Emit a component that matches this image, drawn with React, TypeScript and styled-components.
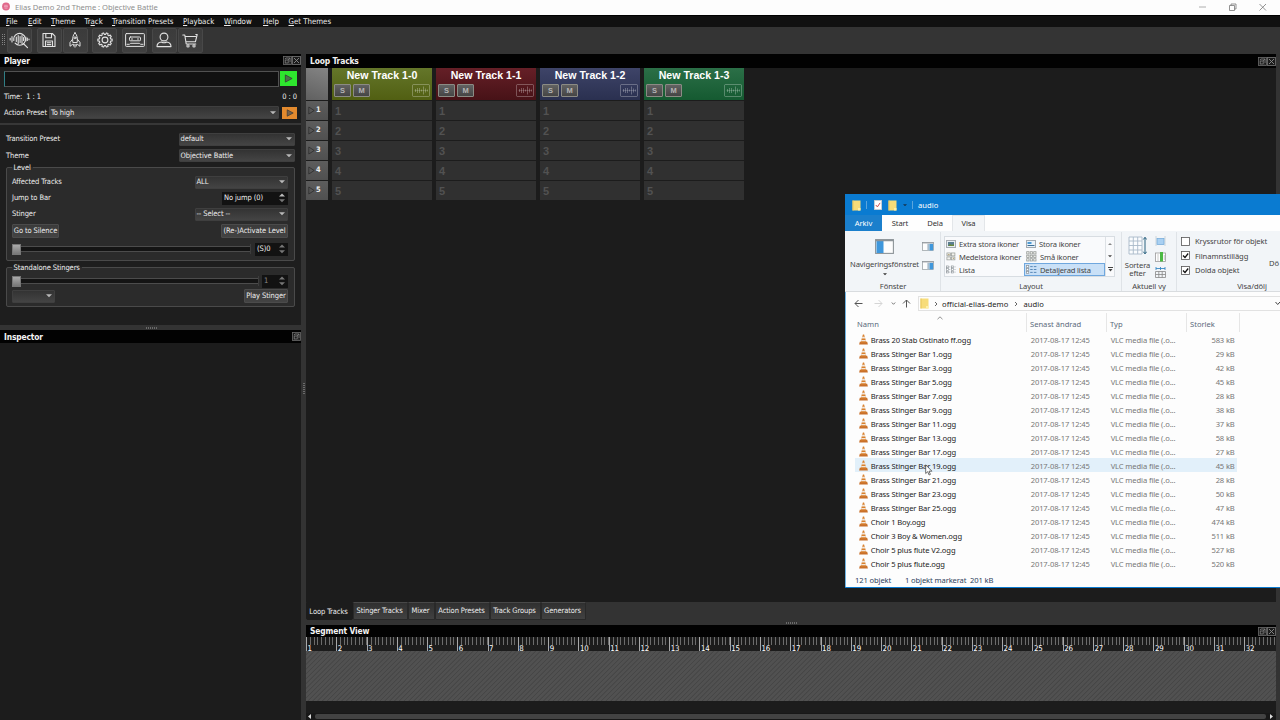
import React from "react";
import styled, { createGlobalStyle, css } from "styled-components";

const GlobalStyle = createGlobalStyle`
  * { box-sizing: border-box; }
  html, body { margin: 0; padding: 0; overflow: hidden; background: #333; }
  svg { display: block; flex: none; }
`;

const tahoma = css`
  font-family: "DejaVu Sans Condensed", "DejaVu Sans", sans-serif;
  font-stretch: condensed;
  font-size: 7.5px;
  letter-spacing: -0.1px;
`;
const segoe = css`
  font-family: "Noto Sans", "Open Sans", sans-serif;
  font-size: 7.6px;
  letter-spacing: -0.12px;
`;

/* ---------- application frame ---------- */
const App = styled.div`
  ${tahoma}
  position: relative;
  width: 1280px;
  height: 720px;
  display: flex;
  flex-direction: column;
  overflow: hidden;
  background: #333333;
  color: #eeeeee;
  white-space: nowrap;
  line-height: 10px;
`;
const TitleBar = styled.header`
  ${segoe}
  height: 15px;
  flex: none;
  display: flex;
  align-items: center;
  padding: 0 13px 2px 2px;
  background: #fdfdfd;
  color: #8d8d8d;
  letter-spacing: -0.03px;
`;
const TitleText = styled.span`
  margin-left: 5px;
  flex: 1;
`;
const WindowButtons = styled.div`
  display: flex;
  gap: 21px;
`;
const MenuBar = styled.nav`
  height: 12px;
  flex: none;
  display: flex;
  align-items: center;
  padding-left: 6px;
  background: #111111;
  border-top: 1px solid #000;
  font-size: 7.8px;
  letter-spacing: 0;
`;
const MenuItem = styled.span<{ $w: number }>`
  width: ${(p) => p.$w}px;
`;
const Toolbar = styled.div`
  height: 27px;
  flex: none;
  display: flex;
  align-items: center;
  padding: 0 0 1px 2px;
  background: #343434;
`;
const ToolButton = styled.div<{ $gap?: number }>`
  width: 25px;
  height: 25px;
  display: grid;
  place-items: center;
  margin-right: ${(p) => p.$gap ?? 1}px;
  border: 1px solid #484848;
  border-radius: 2px;
  background: linear-gradient(#3b3b3b, #404040);
`;
const Workspace = styled.div`
  flex: 1;
  min-height: 0;
  display: flex;
`;
const LeftColumn = styled.div`
  width: 301px;
  display: flex;
  flex-direction: column;
`;
const RightColumn = styled.div`
  width: 970px;
  display: flex;
  flex-direction: column;
`;
const Splitter = styled.div<{ $vertical?: boolean; $size: number; $dot: number }>`
  flex: none;
  ${(p) => (p.$vertical ? `width: ${p.$size}px;` : `height: ${p.$size}px;`)}
  display: flex;
  justify-content: center;
  align-items: ${(p) => (p.$vertical ? "flex-start" : "center")};
  background: #333333;
  &::after {
    content: "";
    ${(p) =>
      p.$vertical
        ? `width: 2px; height: 12px; margin-top: ${p.$dot}px;`
        : `width: 12px; height: 2px; margin-left: ${p.$dot}px;`}
    background: repeating-linear-gradient(${(p) => (p.$vertical ? "180deg" : "90deg")}, #6b6b6b 0 1px, transparent 1px 2px);
  }
`;
const DockTitle = styled.div<{ $h: number }>`
  height: ${(p) => p.$h}px;
  flex: none;
  display: flex;
  align-items: center;
  justify-content: space-between;
  padding: 0 0 0 4px;
  background: #020202;
  color: #f4f4f4;
  font-weight: bold;
  font-size: 8.4px;
  letter-spacing: -0.13px;
`;
const DockButtons = styled.div`
  display: flex;
  gap: 0.5px;
`;

/* ---------- form controls ---------- */
const Row = styled.div<{ $h: number }>`
  height: ${(p) => p.$h}px;
  flex: none;
  display: flex;
  align-items: center;
  justify-content: space-between;
`;
const Combo = styled.div<{ $w: number }>`
  width: ${(p) => p.$w}px;
  height: 13px;
  display: flex;
  align-items: center;
  justify-content: space-between;
  padding: 0 2px 0 0.5px;
  border: 1px solid #3f3f3f;
  border-radius: 1px;
  background: linear-gradient(#333333, #444444);
`;
const Spin = styled.div<{ $w: number; $dim?: boolean }>`
  width: ${(p) => p.$w}px;
  height: 13px;
  display: flex;
  align-items: center;
  justify-content: space-between;
  padding: 0 3px 0 2px;
  background: #121212;
  color: ${(p) => (p.$dim ? "#8a8a8a" : "#eeeeee")};
`;
const PushButton = styled.div<{ $w: number }>`
  width: ${(p) => p.$w}px;
  height: 14px;
  display: flex;
  align-items: center;
  justify-content: center;
  border: 1px solid #4b4b4b;
  border-radius: 1px;
  background: linear-gradient(#3b3b3b, #434343);
`;
const PlayButton = styled.div<{ $color: string; $h: number }>`
  width: ${(p) => (p.$h > 13 ? 17 : 15)}px;
  height: ${(p) => p.$h}px;
  display: grid;
  place-items: center;
  background: ${(p) => p.$color};
`;
const SliderTrack = styled.div<{ $w: number }>`
  width: ${(p) => p.$w}px;
  height: 10px;
  display: flex;
  align-items: center;
  background: linear-gradient(transparent 2px, #4c4c4c 2px 3px, #141414 3px 7px, #4c4c4c 7px 8px, transparent 8px);
  border-right: 1px solid #3c3c3c;
  &::before {
    content: "";
    width: 7px;
    height: 9px;
    border: 1px solid #777;
    background: linear-gradient(#aaaaaa, #777777);
  }
`;
const Transport = styled.section`
  height: 56px;
  flex: none;
  background: #1e1e1e;
  padding: 3px 4px 0 4px;
`;
const Prompt = styled.div`
  width: 275px;
  height: 16px;
  border: 1px solid #515151;
  border-left-color: #2f7f86;
  background: #111111;
`;
const PlayerBody = styled.section`
  height: 202px;
  flex: none;
  border-top: 2px solid #373737;
  padding: 6px 6px 0 6px;
  background: #1e1e1e;
`;
const Group = styled.fieldset<{ $h: number; $top: number }>`
  height: ${(p) => p.$h}px;
  min-width: 0;
  margin: ${(p) => p.$top}px 0 0;
  padding: 2px 6px 0 5px;
  border: 1px solid #4a4a4a;
  border-radius: 2px;
  background: #2b2b2b;
  legend { padding: 0 2px 0 1.5px; line-height: 9px; height: 9px; }
`;
const InspectorBody = styled.div`
  flex: 1;
  background: #1c1c1c;
`;

/* ---------- loop tracks ---------- */
const LoopArea = styled.section`
  height: 534px;
  flex: none;
  display: flex;
  align-items: flex-start;
  background: #1c1c1c;
`;
const LevelColumn = styled.div`
  width: 22px;
  margin-right: 4px;
`;
const LevelHead = styled.div`
  height: 32px;
  margin-bottom: 1px;
  background: linear-gradient(200deg, #848484, #606060);
`;
const LevelCell = styled.div`
  height: 19px;
  margin-bottom: 1px;
  padding: 0 0 1px 2px;
  display: flex;
  align-items: center;
  gap: 1px;
  background: linear-gradient(#5d5d5d, #505050);
  font-size: 7.4px;
  font-weight: bold;
`;
const Track = styled.div`
  width: 100px;
  margin-right: 4px;
  font-family: "Liberation Sans", Arial, sans-serif;
  letter-spacing: 0;
`;
const TrackHead = styled.div<{ $from: string; $to: string }>`
  height: 32px;
  margin-bottom: 1px;
  padding: 1px 2px 0;
  background: linear-gradient(${(p) => p.$from}, ${(p) => p.$to});
`;
const TrackName = styled.div`
  text-align: center;
  font-size: 10.6px;
  font-weight: bold;
  line-height: 12px;
  color: #ffffff;
`;
const TrackButtons = styled.div`
  display: flex;
  align-items: center;
  gap: 2px;
  margin-top: 3px;
  svg { margin-left: auto; }
`;
const Toggle = styled.div`
  width: 17px;
  height: 13px;
  border: 1px solid #8b8b84;
  border-radius: 1px;
  background: linear-gradient(#626262, #454545);
  color: #b4b4b4;
  font-size: 7.5px;
  font-weight: bold;
  line-height: 12px;
  text-align: center;
`;
const Slot = styled.div`
  height: 19px;
  margin-bottom: 1px;
  padding-left: 3px;
  background: #303030;
  color: #525252;
  font-size: 11px;
  font-weight: bold;
  line-height: 20px;
`;
const Tabs = styled.div`
  height: 18px;
  flex: none;
  display: flex;
`;
const Tab = styled.div<{ $w: number; $active?: boolean }>`
  width: ${(p) => p.$w}px;
  padding-right: 2px;
  text-align: center;
  line-height: ${(p) => (p.$active ? 18 : 16)}px;
  background: ${(p) => (p.$active ? "#1c1c1c" : "linear-gradient(#303030, #414141)")};
  border: 1px solid ${(p) => (p.$active ? "#1c1c1c" : "#292929")};
  border-top-color: ${(p) => (p.$active ? "#1c1c1c" : "#484848")};
  border-radius: 0 0 2px 2px;
`;

/* ---------- segment view ---------- */
const Ruler = styled.div`
  height: 14px;
  flex: none;
  display: flex;
  background: #1c1c1c;
`;
const BarMark = styled.div`
  width: 30.27px;
  flex: none;
  padding: 6px 0 0 1.5px;
  line-height: 11px;
  font-size: 7.8px;
  color: #ffffff;
  background:
    linear-gradient(#a8a8a8, #a8a8a8) 0 0 / 1px 14px no-repeat,
    repeating-linear-gradient(90deg, #6c6c6c 0 1px, transparent 1px 3.784px) 0 0 / 100% 8px no-repeat;
`;
const Hatch = styled.div`
  height: 50px;
  flex: none;
  background: repeating-linear-gradient(135deg, #515151 0 1.9px, #464646 2.5px 2.9px, #515151 3.4px);
`;
const SegmentRest = styled.div`
  flex: 1;
  background: #1c1c1c;
`;
const ScrollBar = styled.div`
  height: 7px;
  flex: none;
  display: flex;
  align-items: center;
  gap: 3px;
  padding: 0 2px 0 1px;
  background: #181818;
`;
const Thumb = styled.div`
  flex: 1;
  height: 5px;
  border-radius: 2px;
  background: #434343;
`;

/* ---------- file explorer window ---------- */
const Explorer = styled.div`
  ${segoe}
  position: absolute;
  left: 845px;
  top: 194px;
  width: 435px;
  height: 394px;
  display: flex;
  flex-direction: column;
  overflow: hidden;
  border: solid #0b7bd0;
  border-width: 1px 0 1px 0;
  box-shadow: inset 1px 0 0 #6fb3e2;
  background: #fdfdfd;
  color: #1b1b1b;
`;
const ExTitle = styled.div`
  height: 20px;
  flex: none;
  display: flex;
  align-items: center;
  padding-left: 7px;
  background: #0a7bd1;
  color: #ffffff;
  letter-spacing: 0.05px;
`;
const ExSep = styled.i<{ $l: number; $r: number; $hidden?: boolean }>`
  width: 1px;
  height: 8px;
  margin: 0 ${(p) => p.$r}px 0 ${(p) => p.$l}px;
  background: ${(p) => (p.$hidden ? "transparent" : "#5aa5dd")};
`;
const ExTabs = styled.div`
  height: 16px;
  flex: none;
  display: flex;
  background: #fefefe;
`;
const ExTab = styled.div<{ $w: number; $kind?: "file" | "open" }>`
  width: ${(p) => p.$w}px;
  line-height: 16px;
  text-align: center;
  color: ${(p) => (p.$kind === "file" ? "#ffffff" : "#333333")};
  background: ${(p) => (p.$kind === "file" ? "#1b7fcc" : p.$kind === "open" ? "#f4f6f8" : "transparent")};
  ${(p) => p.$kind === "open" && "border: 1px solid #e3e6e9; border-bottom: 0; line-height: 15px;"}
`;
const Ribbon = styled.div`
  height: 61px;
  flex: none;
  display: flex;
  padding: 1px 0 0 1px;
  background: #f2f5f8;
  border-bottom: 1px solid #d9dcdf;
  color: #444444;
  letter-spacing: -0.08px;
`;
const RibbonGroup = styled.div<{ $w: number; $last?: boolean }>`
  width: ${(p) => p.$w}px;
  flex: none;
  height: 59px;
  display: flex;
  flex-direction: column;
  border-right: ${(p) => (p.$last ? 0 : 1)}px solid #dfe3e7;
`;
const RibbonBody = styled.div<{ $pad: string }>`
  height: 49px;
  display: flex;
  padding: ${(p) => p.$pad};
`;
const RibbonCaption = styled.div`
  text-align: center;
`;
const BigCommand = styled.div<{ $w: number; $gap?: number }>`
  width: ${(p) => p.$w}px;
  display: flex;
  flex-direction: column;
  align-items: center;
  text-align: center;
  line-height: 8px;
  gap: ${(p) => p.$gap ?? 6}px;
  letter-spacing: -0.12px;
`;
const IconStack = styled.div<{ $gap: number; $pad: string }>`
  display: flex;
  flex-direction: column;
  gap: ${(p) => p.$gap}px;
  padding: ${(p) => p.$pad};
`;
const ViewGallery = styled.div`
  display: grid;
  grid-template-columns: 79px 81px 9px;
  grid-auto-rows: 13px;
  border: 1px solid #d8dde2;
  background: #f9fafc;
  height: 41px;
`;
const ViewOption = styled.div<{ $on?: boolean }>`
  display: flex;
  align-items: center;
  gap: 3px;
  padding-left: 1px;
  letter-spacing: -0.17px;
  &:nth-child(3n + 2) { padding-left: 2px; }
  ${(p) => p.$on && "background: #c9e0f7; outline: 1px solid #6fa7de; outline-offset: -1px;"}
`;
const GalleryScroll = styled.div`
  display: grid;
  place-items: center;
  border-left: 1px solid #dde1e5;
`;
const CheckList = styled.div`
  width: 88px;
  display: grid;
  grid-auto-rows: 14.6px;
  align-items: center;
`;
const CheckItem = styled.div`
  display: flex;
  align-items: center;
  gap: 5px;
`;
const ClippedCommand = styled.div`
  padding-top: 24px;
`;
const AddressBar = styled.div`
  height: 19px;
  flex: none;
  display: flex;
  align-items: center;
  padding-left: 9px;
  margin-top: 2px;
`;
const NavIcons = styled.div`
  width: 64px;
  display: flex;
  align-items: center;
`;
const NavGap = styled.i<{ $w: number }>`
  width: ${(p) => p.$w}px;
`;
const AddressField = styled.div`
  flex: 1;
  height: 15px;
  display: flex;
  align-items: center;
  border: 1px solid #e2e2e2;
  border-right: 0;
  padding-left: 1px;
  letter-spacing: 0.06px;
`;
const FieldEnd = styled.span`
  margin-left: auto;
`;
const Crumb = styled.span<{ $l: number; $r: number }>`
  margin: 0 ${(p) => p.$r}px 0 ${(p) => p.$l}px;
`;
const columns = "171px 80px 80px 53px";
const FileHead = styled.div`
  height: 19px;
  flex: none;
  display: grid;
  grid-template-columns: ${columns};
  margin: 0 0 0 10.5px;
  color: #5b6a7c;
`;
const HeadCell = styled.div<{ $w: number }>`
  position: relative;
  width: ${(p) => p.$w}px;
  padding: 6px 0 0 1.5px;
  border-right: 1px solid #e6e6e6;
  letter-spacing: 0;
`;
const SortMark = styled.span`
  position: absolute;
  top: 3px;
  left: 81px;
`;
const FileRow = styled.div<{ $hover?: boolean }>`
  width: 382px;
  height: 14px;
  flex: none;
  display: grid;
  grid-template-columns: ${columns};
  align-items: center;
  margin-left: 10px;
  padding: 1px 0 0 0.7px;
  background: ${(p) => (p.$hover ? "#e2f0fa" : "transparent")};
`;
const FileName = styled.div`
  display: flex;
  align-items: center;
  gap: 3px;
  padding-left: 3px;
  letter-spacing: -0.11px;
`;
const FileMeta = styled.div<{ $right?: boolean }>`
  padding: 0 5px 0 4px;
  color: #777777;
  text-align: ${(p) => (p.$right ? "right" : "left")};
`;
const StatusBar = styled.div`
  display: flex;
  margin-top: 4.500px;
  padding-left: 10px;
  color: #2d3f5c;
`;
const StatusText = styled.span<{ $w: number }>`
  width: ${(p) => p.$w}px;
`;
const Pointer = styled.div`
  position: absolute;
  left: 925px;
  top: 464px;
`;

/* ---------- icons ---------- */
const Arrow = ({ c = "#b9b9b9", w = 6 }: { c?: string; w?: number }) => (
  <svg width={w} height={w / 2 + 0.5} viewBox="0 0 6 3"><path d="M0 0h6L3 3z" fill={c} /></svg>
);
const SpinArrows = ({ dim }: { dim?: boolean }) => (
  <svg width="6" height="10" viewBox="0 0 6 10">
    <path d="M0 3.6L3 .6l3 3z" fill={dim ? "#777" : "#bbb"} />
    <path d="M0 6.2h6l-3 3z" fill="#777" />
  </svg>
);
const Grip = () => (
  <svg width="5" height="14" viewBox="0 0 5 14" fill="#858585">
    {[1, 3, 5, 7, 9, 11].map((y) => <path key={y} d={`M0 ${y}h1v1H0zM2 ${y}h1v1H2z`} />)}
  </svg>
);
const FloatIcon = () => (
  <svg width="9" height="9" viewBox="0 0 9 9" fill="none" stroke="#808080" strokeWidth=".8">
    <rect x=".5" y=".5" width="8" height="8" fill="#1b1b1b" stroke="#6c6c6c" />
    <rect x="2.2" y="4" width="3" height="3" /><path d="M3 2h4v4M5 4l2-2M2 2l1 1M6.6 7.2l.6.4" />
  </svg>
);
const CloseIcon = () => (
  <svg width="9" height="9" viewBox="0 0 9 9" fill="none" stroke="#8c8c8c" strokeWidth=".9">
    <rect x=".5" y=".5" width="8" height="8" fill="#1b1b1b" stroke="#6c6c6c" />
    <path d="M2 2l5 5M7 2l-5 5" />
  </svg>
);
const Play = ({ s = 9 }: { s?: number }) => (
  <svg width={s} height={s} viewBox="0 0 10 10"><path d="M1.5 1l7.5 4-7.5 4z" fill="#555" fillOpacity=".8" stroke="#333" strokeWidth=".8" /></svg>
);
const icon = { fill: "none", stroke: "#e2e2e2", strokeWidth: 1.1, strokeLinejoin: "round" as const, strokeLinecap: "round" as const };
const WaveSearch = () => (
  <svg width="21" height="17" viewBox="0 0 21 17" {...icon}>
    <path d="M1.2 6.300v1.700M3 4.500v5.500M4.800 6v2.500M16.800 5v4M18.300 6v2.500M20 7v.7M7.300 5v4.500M9.200 3.500v8M11.100 4.500v6M13 3.500v8M14.600 5.500v3" />
    <path d="M5 5.300A5.900 5.900 0 1 1 6.1 11.200M14.300 11.500l4.200 4.200" />
  </svg>
);
const Floppy = () => (
  <svg width="14" height="16" viewBox="0 0 14 16" {...icon}>
    <path d="M1 1.500h9.300L13 4.200v10.300H1zM3.800 1.500v4.200h5.700V1.500M3.500 14.500V9h7v5.500M5.200 10.800h3.600M5.200 12.600h3.600" />
  </svg>
);
const Rocket = () => (
  <svg width="12" height="16" viewBox="0 0 12 16" {...icon} strokeWidth={1}>
    <path d="M6 .8C3.800 3 3.400 6 3.800 10.500h4.400C8.600 6 8.200 3 6 .8zM3.600 7.200L1 10.500v3.800l2.600-2M8.400 7.200l2.600 3.300v3.800l-2.600-2M4.700 12.200V14M7.300 12.200V14M6 12.500v2.700" />
    <circle cx="6" cy="5.800" r="1" />
  </svg>
);
const teeth = Array.from({ length: 10 }, (_, i) => {
  const p = (r: number, d: number) => {
    const a = ((i * 36 + d) * Math.PI) / 180;
    return `${(8 + r * Math.cos(a)).toFixed(2)} ${(8 + r * Math.sin(a)).toFixed(2)}`;
  };
  return `${i ? "L" : "M"}${p(5.7, -11)}L${p(7.2, -7)}L${p(7.2, 7)}L${p(5.7, 11)}`;
}).join("");
const Gear = () => (
  <svg width="16" height="16" viewBox="0 0 16 16" {...icon}><path d={teeth + "z"} /><circle cx="8" cy="8" r="2.900" /></svg>
);
const Cassette = () => (
  <svg width="20" height="14" viewBox="0 0 20 14" {...icon} strokeWidth={1}>
    <rect x=".6" y=".6" width="18.800" height="12.800" rx=".8" /><rect x="4.500" y="4" width="11" height="3.800" rx="1" />
    <path d="M6.500 6h1M12.500 6h1M2 11.300h2.500l1-1h9l1 1H18" />
  </svg>
);
const Person = () => (
  <svg width="16" height="16" viewBox="0 0 16 16" {...icon}>
    <circle cx="8" cy="5" r="3.900" /><path d="M1 14.600c0-3.200 2-4.400 4.500-4.600 1.600 1 3.400 1 5 0 2.500.200 4.500 1.400 4.500 4.600z" />
  </svg>
);
const Cart = () => (
  <svg width="16" height="15" viewBox="0 0 16 15" {...icon}>
    <path d="M.8 2h2l1.400 9h9.600M3.100 3.500h10.500M15.200 1.500l-1.800 7.300H4M15.200 1.500h-1.400" /><circle cx="6" cy="12.900" r="1.100" /><circle cx="12" cy="12.900" r="1.100" />
  </svg>
);
const WaveBox = () => (
  <svg width="18" height="13" viewBox="0 0 18 13" fill="none" stroke="#fff" strokeOpacity=".27" strokeWidth="1">
    <rect x=".5" y=".5" width="17" height="12" rx="1" />
    <path d="M3.500 5v3M5.500 4v5M7.500 4v5M9.500 5.500v2M11.500 2.500v8M13.500 4.500v4M15.500 5.500v2" />
    <path d="M2.500 6.500h13" strokeWidth=".6" />
  </svg>
);
const AppLogo = () => (
  <svg width="8" height="9" viewBox="0 0 8 9">
    <circle cx="4" cy="4.500" r="3.900" fill="#e0688a" /><path d="M2.200 3.300h3.500M2 4.700h4M2.500 6.100h3" stroke="#f3b3c6" strokeWidth=".8" />
  </svg>
);
const Folder = () => (
  <svg width="9" height="11" viewBox="0 0 9 11">
    <path d="M.5.500h8v10h-8z" fill="#f7dc79" /><path d="M6 8h2.500v2.500H6z" fill="#fff0a8" /><path d="M.5.500h1v10h-1z" fill="#e7c65a" />
  </svg>
);
const CheckDoc = () => (
  <svg width="8" height="10" viewBox="0 0 8 10">
    <rect x=".3" y=".3" width="7.400" height="9.400" fill="#fff" stroke="#c8c8c8" strokeWidth=".6" /><path d="M1.800 5l1.600 1.900 2.700-4" fill="none" stroke="#cc4b4b" />
  </svg>
);
const Cone = () => (
  <svg width="9" height="11" viewBox="0 0 9 11">
    <path d="M.8 7.800h7.400l.7 2.700H.1z" fill="#c9702a" /><path d="M3.900.6h1.200L7.400 8.600H1.600z" fill="#d9822f" />
    <path d="M3.300 2.800h2.400l.5 1.700H2.800zM2.300 6.100h4.400l.3 1.200H2z" fill="#f2e6dc" />
  </svg>
);
const Pane = ({ side, big }: { side: "l" | "r"; big?: boolean }) => (
  <svg width={big ? 19 : 12} height={big ? 15 : 9} viewBox="0 0 19 15" preserveAspectRatio="none">
    <rect x=".6" y=".6" width="17.800" height="13.800" fill="#fdfdfd" stroke="#8d9499" strokeWidth="1.100" />
    {side === "l" ? <rect x="1.500" y="2" width="7" height="12" fill="#3f97dc" /> : <path d="M8.500 3h3.500v11H8.500z" fill="#a9bccb" />}
    {side === "r" && <rect x="12" y="3" width="5.600" height="11" fill="#3f97dc" />}
    <path d="M.6 1.500h17.800" stroke="#8d9499" strokeWidth="1.500" />
  </svg>
);
const Picture = () => (
  <svg width="10" height="8" viewBox="0 0 10 8">
    <rect x=".5" y=".5" width="9" height="7" fill="#e7edf2" stroke="#a4aab0" /><rect x="2" y="2" width="6" height="4" fill="#5b7e91" /><path d="M2 6l2-2 2 1 2-1v2z" fill="#6b8a3d" />
  </svg>
);
const PictureWide = () => (
  <svg width="10" height="8" viewBox="0 0 10 8">
    <rect x=".5" y=".5" width="9" height="7" fill="#e8f1f9" stroke="#a4aab0" /><path d="M1.500 2h4v2h-4z" fill="#4d9ad4" /><path d="M1.500 5.500h7" stroke="#3d6f95" />
  </svg>
);
const Tiles = ({ n }: { n: 2 | 3 }) => (
  <svg width={n === 2 ? 10 : 11} height={n === 2 ? 9 : 11} viewBox={n === 2 ? "0 0 11 9" : "0 0 11 11"} fill="#f3f3ee" stroke="#979b98" strokeWidth=".8">
    {(n === 2 ? [1, 6] : [0.7, 4.2, 7.7]).map((x) =>
      (n === 2 ? [0.6, 5] : [0.7, 4.2, 7.7]).map((y) => <rect key={x + "-" + y} x={x} y={y} width={n === 2 ? 3.8 : 2.3} height={n === 2 ? 3.2 : 2.3} />)
    )}
    {n === 2 && <path d="M2 2.500h2M7.500 6.500h1.500" stroke="#8e7b3f" />}
  </svg>
);
const ListIcon = ({ detail }: { detail?: boolean }) => (
  <svg width={detail ? 11 : 10} height="9" viewBox="0 0 11 9" fill="#fff" stroke="#8c9399" strokeWidth=".7">
    {[0.6, 3.5, 6.4].map((y) => (
      <g key={y}>
        <rect x=".5" y={y} width="2.200" height="1.900" />
        {detail ? <path d={`M4.200 ${y + 1}h2.500M7.800 ${y + 1}h2.600`} stroke="#4d7fb0" strokeWidth=".9" /> : <><path d={`M3.500 ${y + 1}h1.200M9.300 ${y + 1}h1.200`} /><rect x="6.200" y={y} width="2.200" height="1.900" /></>}
      </g>
    ))}
  </svg>
);
const SortIcon = () => (
  <svg width="19" height="20" viewBox="0 0 19 20" fill="none">
    <path d="M1 1h13v17H1zM1 5h13M1 9.500h13M1 14h13M5.300 1v17M9.700 1v17" stroke="#a9bac9" strokeWidth=".9" fill="#fafcfe" />
    <path d="M17 1.500v16M15.300 3.500L17 1.300l1.700 2.200M15.300 15.700L17 17.900l1.700-2.200" stroke="#28617f" strokeWidth="1" />
  </svg>
);
const GroupBy = () => (
  <svg width="11" height="11" viewBox="0 0 11 11"><path d="M1 .5v10M10 .5v10" stroke="#9aa3ab" strokeWidth=".8" strokeDasharray="1 1" /><rect x="2" y="2.500" width="7" height="6" fill="#a9d0f2" stroke="#6ea7d8" strokeWidth=".7" /></svg>
);
const AddColumns = () => (
  <svg width="11" height="11" viewBox="0 0 11 11"><rect x=".5" y="2" width="10" height="8.500" fill="#fff" stroke="#999" strokeWidth=".8" /><rect x="5" y="1" width="3" height="9.500" fill="#4cb944" /><path d="M3 3v7M9.300 4v5" stroke="#aaa" strokeWidth=".6" /></svg>
);
const SizeColumns = () => (
  <svg width="11" height="12" viewBox="0 0 11 12" fill="none"><path d="M.5 5.500h10v6H.5zM.5 8.500h10M3.800 5.500v6M7.200 5.500v6" stroke="#888" strokeWidth=".8" /><path d="M1 2.500h9M1 1v3M5.500 1v3M10 1v3" stroke="#3a8ac4" strokeWidth=".9" /></svg>
);
const CheckBox = ({ on }: { on?: boolean }) => (
  <svg width="9" height="9" viewBox="0 0 9 9" fill="none">
    <rect x=".5" y=".5" width="8" height="8" fill="#fff" stroke="#555" strokeWidth=".8" />{on && <path d="M2 4.500l2 2 3.200-4" stroke="#111" strokeWidth="1.300" />}
  </svg>
);
const NavArrow = ({ d, c = "#555", w = 9 }: { d: string; c?: string; w?: number }) => (
  <svg width={w} height="9" viewBox={`0 0 ${w} 9`} fill="none" stroke={c} strokeWidth="1"><path d={d} /></svg>
);
const Chevron = () => <svg width="4" height="6" viewBox="0 0 4 6" fill="none" stroke="#555" strokeWidth=".9"><path d="M1 1l2 2-2 2" /></svg>;

/* ---------- data ---------- */
const menus: { label: string; key: number; width: number }[] = [
  { label: "File", key: 0, width: 22 },
  { label: "Edit", key: 0, width: 23 },
  { label: "Theme", key: 0, width: 33.5 },
  { label: "Track", key: 2, width: 27.5 },
  { label: "Transition Presets", key: 0, width: 71 },
  { label: "Playback", key: 0, width: 41 },
  { label: "Window", key: 0, width: 39 },
  { label: "Help", key: 0, width: 25.5 },
  { label: "Get Themes", key: 0, width: 50 },
];
const tracks = [
  { name: "New Track 1-0", from: "#64762a", to: "#515f12" },
  { name: "New Track 1-1", from: "#651f27", to: "#471217" },
  { name: "New Track 1-2", from: "#3e4468", to: "#2a3050" },
  { name: "New Track 1-3", from: "#2b6f47", to: "#155a31" },
];
const tabs: [string, number][] = [["Loop Tracks", 47], ["Stinger Tracks", 55], ["Mixer", 27], ["Action Presets", 55], ["Track Groups", 51], ["Generators", 45]];
const files: [string, string][] = [
  ["Brass 20 Stab Ostinato ff.ogg", "583 kB"], ["Brass Stinger Bar 1.ogg", "29 kB"], ["Brass Stinger Bar 3.ogg", "42 kB"],
  ["Brass Stinger Bar 5.ogg", "45 kB"], ["Brass Stinger Bar 7.ogg", "28 kB"], ["Brass Stinger Bar 9.ogg", "38 kB"],
  ["Brass Stinger Bar 11.ogg", "37 kB"], ["Brass Stinger Bar 13.ogg", "58 kB"], ["Brass Stinger Bar 17.ogg", "27 kB"],
  ["Brass Stinger Bar 19.ogg", "45 kB"], ["Brass Stinger Bar 21.ogg", "28 kB"], ["Brass Stinger Bar 23.ogg", "50 kB"],
  ["Brass Stinger Bar 25.ogg", "47 kB"], ["Choir 1 Boy.ogg", "474 kB"], ["Choir 3 Boy & Women.ogg", "511 kB"],
  ["Choir 5 plus flute V2.ogg", "527 kB"], ["Choir 5 plus flute.ogg", "520 kB"],
];
const levels = [1, 2, 3, 4, 5];

const Dock = ({ title, h, closable = true }: { title: string; h: number; closable?: boolean }) => (
  <DockTitle $h={h}>
    {title}
    <DockButtons><FloatIcon />{closable && <CloseIcon />}</DockButtons>
  </DockTitle>
);

const PlayerPanel = () => (
  <>
    <Dock title="Player" h={13} />
    <Transport>
      <Row $h={17}><Prompt /><PlayButton $color="#2ee62e" $h={15}><Play /></PlayButton></Row>
      <Row $h={19}><span>Time:&nbsp; 1 : 1</span><span>0 : 0</span></Row>
      <Row $h={13}>
        <span>Action Preset</span><Combo $w={230}>To high<Arrow /></Combo>
        <PlayButton $color="#e38a2e" $h={12}><Play s={8} /></PlayButton>
      </Row>
    </Transport>
    <PlayerBody>
      <Row $h={16}><span>Transition Preset</span><Combo $w={116}>default<Arrow /></Combo></Row>
      <Row $h={17}><span>Theme</span><Combo $w={116}>Objective Battle<Arrow /></Combo></Row>
      <Group $h={98} $top={-1}>
        <legend>Level</legend>
        <Row $h={16}><span>Affected Tracks</span><Combo $w={93}>ALL<Arrow /></Combo></Row>
        <Row $h={16}><span>Jump to Bar</span><Spin $w={66}>No jump (0)<SpinArrows /></Spin></Row>
        <Row $h={16}><span>Stinger</span><Combo $w={93}>-- Select --<Arrow /></Combo></Row>
        <Row $h={17}><PushButton $w={47}>Go to Silence</PushButton><PushButton $w={67}>(Re-)Activate Level</PushButton></Row>
        <Row $h={20}><SliderTrack $w={239} /><Spin $w={33}>(S)0<SpinArrows dim /></Spin></Row>
      </Group>
      <Group $h={44} $top={2}>
        <legend>Standalone Stingers</legend>
        <Row $h={14}><SliderTrack $w={247} /><Spin $w={26} $dim>1<SpinArrows dim /></Spin></Row>
        <Row $h={16}><Combo $w={43}><span /><Arrow /></Combo><PushButton $w={44}>Play Stinger</PushButton></Row>
      </Group>
    </PlayerBody>
  </>
);

const LoopTracks = () => (
  <>
    <Dock title="Loop Tracks" h={14} />
    <LoopArea>
      <LevelColumn>
        <LevelHead />
        {levels.map((n) => (
          <LevelCell key={n}>
            <svg width="7" height="9" viewBox="0 0 7 9"><path d="M.8 1l5.400 3.500L.8 8z" fill="none" stroke="#2c2c2c" strokeWidth=".8" /></svg>{n}
          </LevelCell>
        ))}
      </LevelColumn>
      {tracks.map((t) => (
        <Track key={t.name}>
          <TrackHead $from={t.from} $to={t.to}>
            <TrackName>{t.name}</TrackName>
            <TrackButtons><Toggle>S</Toggle><Toggle>M</Toggle><WaveBox /></TrackButtons>
          </TrackHead>
          {levels.map((n) => <Slot key={n}>{n}</Slot>)}
        </Track>
      ))}
    </LoopArea>
    <Tabs>{tabs.map(([name, w], i) => <Tab key={name} $w={w} $active={i === 0}>{name}</Tab>)}</Tabs>
  </>
);

const SegmentView = () => (
  <>
    <Dock title="Segment View" h={12} />
    <Ruler>{Array.from({ length: 32 }, (_, i) => <BarMark key={i}>{i + 1}</BarMark>)}</Ruler>
    <Hatch />
    <SegmentRest />
    <ScrollBar>
      <svg width="5" height="5" viewBox="0 0 5 5"><path d="M4 0v5L1 2.500z" fill="#ddd" /></svg>
      <Thumb />
      <svg width="5" height="5" viewBox="0 0 5 5"><path d="M1 0v5l3-2.500z" fill="#ddd" /></svg>
    </ScrollBar>
  </>
);

const ExplorerWindow = () => (
  <Explorer>
    <ExTitle>
      <Folder /><ExSep $l={5} $r={7} /><CheckDoc />
      <ExSep $l={2} $r={3} $hidden /><Folder />
      <ExSep $l={2} $r={3} $hidden /><Arrow c="#16334d" w={4} />
      <ExSep $l={5} $r={5} />audio
    </ExTitle>
    <ExTabs>
      <ExTab $w={37} $kind="file">Arkiv</ExTab><ExTab $w={36}>Start</ExTab><ExTab $w={34}>Dela</ExTab><ExTab $w={33} $kind="open">Visa</ExTab>
    </ExTabs>
    <Ribbon>
      <RibbonGroup $w={95}>
        <RibbonBody $pad="7px 0 0 4px">
          <BigCommand $w={69} $gap={5.5}><Pane side="l" big /><span>Navigeringsfönstret</span><Arrow c="#333" w={4} /></BigCommand>
          <IconStack $gap={10} $pad="3px 0 0 3px"><Pane side="r" /><Pane side="r" /></IconStack>
        </RibbonBody>
        <RibbonCaption>Fönster</RibbonCaption>
      </RibbonGroup>
      <RibbonGroup $w={181}>
        <RibbonBody $pad="4px 0 0 3px">
          <ViewGallery>
            <ViewOption><Picture />Extra stora ikoner</ViewOption><ViewOption><PictureWide />Stora ikoner</ViewOption><GalleryScroll><svg width="4" height="2" viewBox="0 0 4 2"><path d="M0 2h4L2 0z" fill="#888" /></svg></GalleryScroll>
            <ViewOption><Tiles n={2} />Medelstora ikoner</ViewOption><ViewOption><Tiles n={3} />Små ikoner</ViewOption><GalleryScroll><Arrow c="#444" w={4} /></GalleryScroll>
            <ViewOption><ListIcon />Lista</ViewOption><ViewOption $on><ListIcon detail />Detaljerad lista</ViewOption><GalleryScroll><svg width="5" height="5" viewBox="0 0 5 5"><path d="M0 .5h5" stroke="#444" /><path d="M.5 2h4l-2 2.500z" fill="#444" /></svg></GalleryScroll>
          </ViewGallery>
        </RibbonBody>
        <RibbonCaption>Layout</RibbonCaption>
      </RibbonGroup>
      <RibbonGroup $w={55}>
        <RibbonBody $pad="4px 0 0 1px">
          <BigCommand $w={29} $gap={4.5}><SortIcon /><span>Sortera<br />efter</span></BigCommand>
          <IconStack $gap={4} $pad="0 0 0 3px"><GroupBy /><AddColumns /><SizeColumns /></IconStack>
        </RibbonBody>
        <RibbonCaption>Aktuell vy</RibbonCaption>
      </RibbonGroup>
      <RibbonGroup $w={150} $last>
        <RibbonBody $pad="2px 0 0 4px">
          <CheckList>
            <CheckItem><CheckBox />Kryssrutor för objekt</CheckItem>
            <CheckItem><CheckBox on />Filnamnstillägg</CheckItem>
            <CheckItem><CheckBox on />Dolda objekt</CheckItem>
          </CheckList>
          <ClippedCommand>Dö</ClippedCommand>
        </RibbonBody>
        <RibbonCaption>Visa/dölj</RibbonCaption>
      </RibbonGroup>
    </Ribbon>
    <AddressBar>
      <NavIcons>
        <NavArrow d="M8.500 4.500H1M4.500 1L1 4.500 4.500 8" />
        <NavGap $w={11} /><NavArrow c="#d5d5d5" d="M.5 4.500H8M4.500 1L8 4.500 4.500 8" />
        <NavGap $w={8} /><NavArrow w={5} c="#777" d="M.8 3.500l1.700 1.800 1.700-1.800" />
        <NavGap $w={6} /><NavArrow d="M4.500 8.500V1M1 4.500L4.500 1 8 4.500" />
      </NavIcons>
      <AddressField>
        <Folder /><Crumb $l={4.5} $r={4.5}><Chevron /></Crumb>official-elias-demo<Crumb $l={5.5} $r={5.5}><Chevron /></Crumb>audio
        <FieldEnd><NavArrow w={5} c="#444" d="M.5 3l2.200 2.500L5 3" /></FieldEnd>
      </AddressField>
    </AddressBar>
    <FileHead>
      <HeadCell $w={171}>
        <SortMark><svg width="6" height="4" viewBox="0 0 6 4" fill="none" stroke="#777" strokeWidth=".8"><path d="M.5 3.200L3 .8l2.500 2.400" /></svg></SortMark>
        Namn
      </HeadCell>
      <HeadCell $w={80}>&nbsp;Senast ändrad</HeadCell><HeadCell $w={80}>&nbsp;Typ</HeadCell><HeadCell $w={53}>&nbsp;Storlek</HeadCell>
    </FileHead>
    {files.map(([name, size]) => (
      <FileRow key={name} $hover={name === "Brass Stinger Bar 19.ogg"}>
        <FileName><Cone />{name}</FileName><FileMeta>2017-08-17 12:45</FileMeta><FileMeta>VLC media file (.o...</FileMeta><FileMeta $right>{size}</FileMeta>
      </FileRow>
    ))}
    <StatusBar><StatusText $w={50}>121 objekt</StatusText><StatusText $w={65}>1 objekt markerat</StatusText><span>201 kB</span></StatusBar>
  </Explorer>
);

export default function Root() {
  return (
    <App>
      <GlobalStyle />
      <TitleBar>
        <AppLogo /><TitleText>Elias Demo 2nd Theme : Objective Battle</TitleText>
        <WindowButtons>
          <svg width="9" height="8" viewBox="0 0 9 8" stroke="#999"><path d="M1 4h7" strokeWidth=".8" /></svg>
          <svg width="9" height="8" viewBox="0 0 9 8" stroke="#777" strokeWidth=".8" fill="none"><path d="M1.500 2.500h5v5h-5zM3 2.500V1h5v5H6.500" /></svg>
          <svg width="9" height="8" viewBox="0 0 9 8" stroke="#777" strokeWidth=".8"><path d="M1.500 1l6.500 6.500M8 1L1.500 7.500" /></svg>
        </WindowButtons>
      </TitleBar>
      <MenuBar>
        {menus.map(({ label, key, width }) => (
          <MenuItem key={label} $w={width}>{label.slice(0, key)}<u>{label[key]}</u>{label.slice(key + 1)}</MenuItem>
        ))}
      </MenuBar>
      <Toolbar>
        <Grip />
        <ToolButton $gap={4.5}><WaveSearch /></ToolButton>
        <ToolButton><Floppy /></ToolButton>
        <ToolButton $gap={4.5}><Rocket /></ToolButton>
        <ToolButton $gap={5}><Gear /></ToolButton>
        <ToolButton $gap={4.5}><Cassette /></ToolButton>
        <ToolButton><Person /></ToolButton>
        <ToolButton><Cart /></ToolButton>
      </Toolbar>
      <Workspace>
        <LeftColumn>
          <PlayerPanel />
          <Splitter $size={5} $dot={2} />
          <Dock title="Inspector" h={13} closable={false} />
          <InspectorBody />
        </LeftColumn>
        <Splitter $vertical $size={5} $dot={329} />
        <RightColumn>
          <LoopTracks />
          <Splitter $size={5} $dot={1} />
          <SegmentView />
        </RightColumn>
      </Workspace>
      <ExplorerWindow />
      <Pointer>
        <svg width="8" height="12" viewBox="0 0 8 12"><path d="M.7.800v8.700l2-1.800 1.400 3.300 1.300-.6L4 7.200h2.900z" fill="#fff" stroke="#333" strokeWidth=".7" /></svg>
      </Pointer>
    </App>
  );
}
